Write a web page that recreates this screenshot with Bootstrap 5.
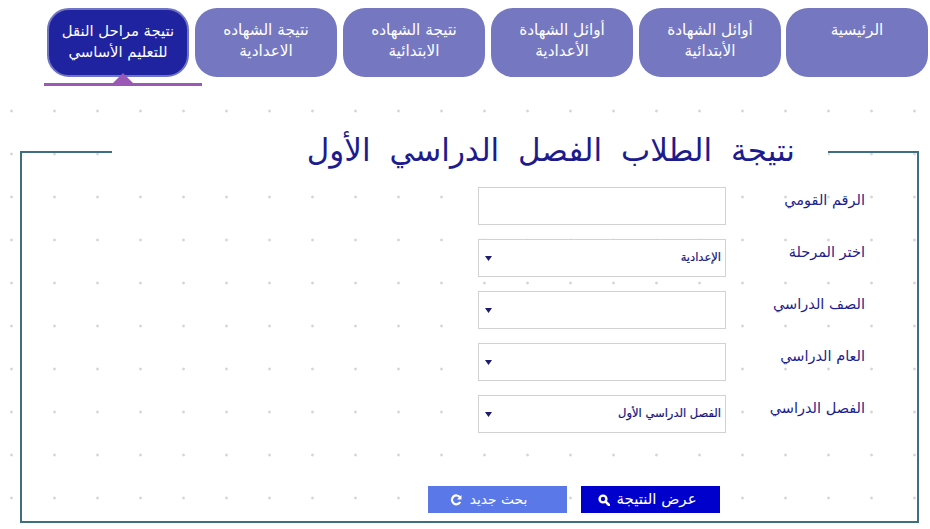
<!DOCTYPE html>
<html lang="ar" dir="rtl">
<head>
<meta charset="utf-8">
<title>نتيجة الطلاب</title>
<link href="https://cdn.jsdelivr.net/npm/bootstrap@5.3.0/dist/css/bootstrap.min.css" rel="stylesheet">
<style>
html,body{margin:0;height:529px;overflow:hidden;background:#fff}
body{font-family:"DejaVu Sans",sans-serif}
.top-band{height:100px;padding:8px 2px 0 0;position:relative}
.tab-row{gap:6px}
.tab-item{width:142px;height:69px;border-radius:22px;background:#7578c0;color:#fff;font-size:15.3px;line-height:21px;padding:12px 4px 0;text-align:center;text-decoration:none;display:block;position:relative}
.tab-item:first-child{margin-left:-1px}
.tab-item.is-on{background:#1f239f;border:2px solid #6f74c4;padding:10px 0 0;font-size:14.8px;font-weight:500}
.tab-line{position:absolute;left:44px;top:83px;width:158px;height:3px;background:#9b59b6}
.tab-tip{position:absolute;left:113px;top:73px;width:0;height:0;border-left:10px solid transparent;border-right:10px solid transparent;border-bottom:10px solid #9b59b6}
.dot-area{height:429px;padding-top:32px;background-image:radial-gradient(circle at 11.5px 11px,#d6d6d6 0,#d6d6d6 .9px,transparent 1.9px);background-size:43px 43px}
.frame-box{margin:0 11px 0 20px;height:391px;border:2px solid #3f6e80;padding:0 0 8px}
.frame-title{float:none;width:716px;height:40px;margin:0 89px 0 auto;padding:0 33px 0 0;background:#fff;color:#1c1c8e;font-family:"DejaVu Sans",serif;font-size:31px;line-height:36px;word-spacing:9px;text-align:right}
.form-zone{padding:15px 52px 0 0}
.field-line{height:38px;margin-bottom:14px;gap:0}
.field-name{width:139px;font-size:14.5px;line-height:26px;color:#1c1c8e;padding-right:0;margin:0}
.field-ctl{width:248px;height:38px;border:1px solid #d2d2d2;border-radius:0;background-color:#fff;color:#14147e;font-size:11.5px;font-weight:400;-webkit-text-stroke:.2px #14147e;padding:0 4px 0 20px;box-shadow:none}
select.field-ctl{background-position:left 6px center;background-size:7px 5px;background-image:url("data:image/svg+xml,%3Csvg xmlns='http://www.w3.org/2000/svg' viewBox='0 0 7 5'%3E%3Cpath d='M0 0h7L3.5 5z' fill='%231c1c6e'/%3E%3C/svg%3E")}
.btn-zone{padding-right:145px;margin-top:53px;gap:14px}
.act-btn{width:139px;height:27px;border:0;border-radius:0;color:#fff;font-size:15px;line-height:27px;padding:0;display:flex;align-items:center;justify-content:center;gap:6px}
.act-main,.act-main:hover{background:#0000cd;color:#fff;padding-right:6px}
.act-alt,.act-alt:hover{background:#5b78e8;color:#fff;font-size:13.8px;gap:8px;padding-right:18px}
</style>
</head>
<body>
<header class="top-band">
<nav class="d-flex tab-row">
<a class="tab-item" href="#">الرئيسية</a>
<a class="tab-item" href="#">أوائل الشهادة<br>الأبتدائية</a>
<a class="tab-item" href="#">أوائل الشهادة<br>الأعدادية</a>
<a class="tab-item" href="#">نتيجة الشهاده<br>الابتدائية</a>
<a class="tab-item" href="#">نتيجة الشهاده<br>الاعدادية</a>
<a class="tab-item is-on" href="#">نتيجة مراحل النقل<br>للتعليم الأساسي</a>
</nav>
<div class="tab-line"></div>
<div class="tab-tip"></div>
</header>
<main class="dot-area">
<fieldset class="frame-box">
<legend class="frame-title">نتيجة الطلاب الفصل الدراسي الأول</legend>
<form class="form-zone">
<div class="d-flex field-line"><label class="field-name" for="f1">الرقم القومي</label><input id="f1" class="form-control field-ctl" type="text"></div>
<div class="d-flex field-line"><label class="field-name" for="f2">اختر المرحلة</label><select id="f2" class="form-select field-ctl"><option>الإعدادية</option></select></div>
<div class="d-flex field-line"><label class="field-name" for="f3">الصف الدراسي</label><select id="f3" class="form-select field-ctl"><option></option></select></div>
<div class="d-flex field-line"><label class="field-name" for="f4">العام الدراسي</label><select id="f4" class="form-select field-ctl"><option></option></select></div>
<div class="d-flex field-line"><label class="field-name" for="f5">الفصل الدراسي</label><select id="f5" class="form-select field-ctl"><option>الفصل الدراسي الأول</option></select></div>
<div class="d-flex btn-zone">
<button type="button" class="btn act-btn act-main">عرض النتيجة
<svg width="12" height="12" viewBox="0 0 12 12"><circle cx="5" cy="5" r="3.4" fill="none" stroke="#fff" stroke-width="2.4"/><path d="M7.6 7.6L11 11" stroke="#fff" stroke-width="2.6" stroke-linecap="round"/></svg></button>
<button type="button" class="btn act-btn act-alt">بحث جديد
<svg width="12" height="12" viewBox="0 0 12 12"><path d="M10 3.4A4.4 4.4 0 1 0 10.2 8" fill="none" stroke="#fff" stroke-width="2.2"/><path d="M11.5 1v4.5H7z" fill="#fff"/></svg></button>
</div>
</form>
</fieldset>
</main>
<script src="https://cdn.jsdelivr.net/npm/bootstrap@5.3.0/dist/js/bootstrap.bundle.min.js"></script>
</body>
</html>
